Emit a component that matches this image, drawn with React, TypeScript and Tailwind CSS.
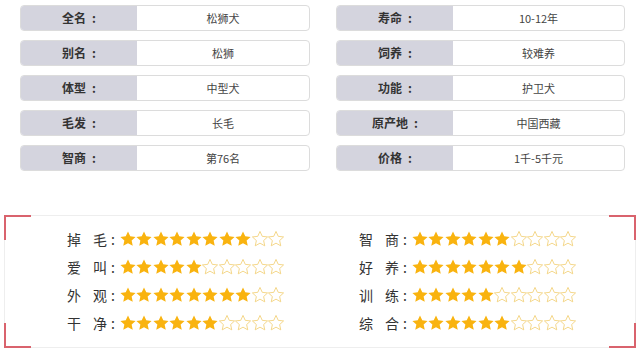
import React from "react";

const leftInfo = [
  { label: "全名", value: "松狮犬" },
  { label: "别名", value: "松狮" },
  { label: "体型", value: "中型犬" },
  { label: "毛发", value: "长毛" },
  { label: "智商", value: "第76名" },
];

const rightInfo = [
  { label: "寿命", value: "10-12年" },
  { label: "饲养", value: "较难养" },
  { label: "功能", value: "护卫犬" },
  { label: "原产地", value: "中国西藏" },
  { label: "价格", value: "1千-5千元" },
];

const leftRatings = [
  { a: "掉", b: "毛", n: 8 },
  { a: "爱", b: "叫", n: 5 },
  { a: "外", b: "观", n: 8 },
  { a: "干", b: "净", n: 6 },
];

const rightRatings = [
  { a: "智", b: "商", n: 6 },
  { a: "好", b: "养", n: 7 },
  { a: "训", b: "练", n: 5 },
  { a: "综", b: "合", n: 6 },
];

const STAR =
  "M12 1.8l3.05 6.6 7.2.8-5.35 4.9 1.5 7.1L12 17.6l-6.4 3.6 1.5-7.1L1.75 9.2l7.2-.8z";

function Star({ filled }: { filled: boolean }) {
  return (
    <svg viewBox="1.2 1.2 21.6 21.6" className="w-[16px] h-[16px] shrink-0">
      {filled ? (
        <path d={STAR} fill="#f9b30f" />
      ) : (
        <path d={STAR} fill="none" stroke="#f3d27c" strokeWidth="1.2" strokeLinejoin="round" />
      )}
    </svg>
  );
}

function InfoRow({ label, value }: { label: string; value: string }) {
  return (
    <div className="flex h-[26px] rounded-[4px] border border-[#dcdcdc] overflow-hidden bg-white">
      <div className="w-[116px] shrink-0 bg-[#d4d4de] flex items-center justify-center text-[12px] font-semibold text-[#333]">
        {label}
        <span className="ml-[6px]">:</span>
      </div>
      <div className="flex-1 flex items-center justify-center text-[11px] text-[#444]">
        {value}
      </div>
    </div>
  );
}

function RatingRow({ a, b, n }: { a: string; b: string; n: number }) {
  return (
    <div className="flex items-center h-[28px]">
      <div className="w-[40px] flex justify-between text-[14px] text-[#333]">
        <span>{a}</span>
        <span>{b}</span>
      </div>
      <span className="text-[14px] text-[#333] ml-[4px] mr-[5px]">:</span>
      <div className="flex gap-[0.5px]">
        {Array.from({ length: 10 }).map((_, i) => (
          <Star key={i} filled={i < n} />
        ))}
      </div>
    </div>
  );
}

function Corner({ pos }: { pos: string }) {
  return <div className={`absolute w-[27px] h-[25px] border-[#d9636d] ${pos}`} />;
}

export default function App() {
  return (
    <div
      className="w-[640px] h-[356px] bg-white relative overflow-hidden"
      style={{ fontFamily: '"Noto Sans CJK SC", "Noto Sans", sans-serif' }}
    >
      {/* info cards */}
      <div className="flex pt-[5px] pl-[20px] gap-[26px]">
        <div className="w-[290px] flex flex-col gap-[9px]">
          {leftInfo.map((r) => (
            <InfoRow key={r.label} {...r} />
          ))}
        </div>
        <div className="w-[289px] flex flex-col gap-[9px]">
          {rightInfo.map((r) => (
            <InfoRow key={r.label} {...r} />
          ))}
        </div>
      </div>

      {/* ratings */}
      <div className="relative mt-[44px] ml-[4px] w-[632px] h-[133px] border border-[#eeeeee]">
        <Corner pos="-top-px -left-px border-t-2 border-l-2" />
        <Corner pos="-bottom-px -left-px border-b-2 border-l-2" />
        <Corner pos="-top-px -right-px border-t-2 border-r-2" />
        <Corner pos="-bottom-px -right-px border-b-2 border-r-2" />
        <div className="flex pt-[9px]">
          <div className="ml-[62px] w-[292px] flex flex-col">
            {leftRatings.map((r) => (
              <RatingRow key={r.a} {...r} />
            ))}
          </div>
          <div className="flex flex-col">
            {rightRatings.map((r) => (
              <RatingRow key={r.a} {...r} />
            ))}
          </div>
        </div>
      </div>
    </div>
  );
}
